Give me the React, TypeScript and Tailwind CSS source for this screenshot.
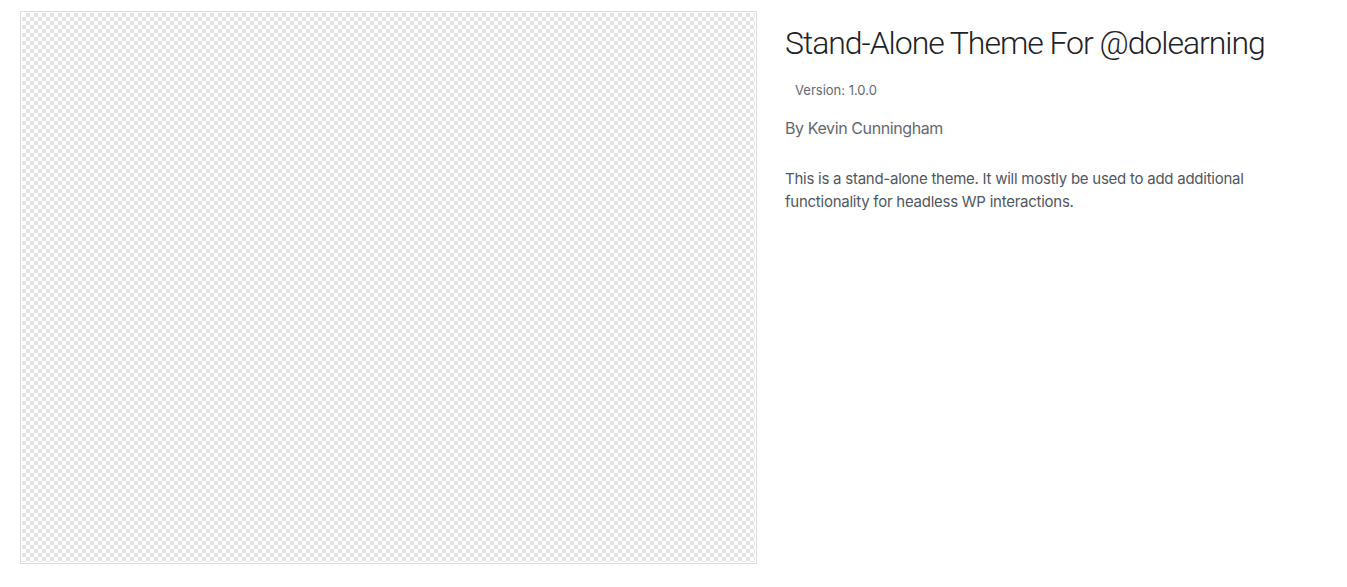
const theme = {
  name: "Stand-Alone Theme For @dolearning",
  version: "1.0.0",
  author: "Kevin Cunningham",
  description:
    "This is a stand-alone theme. It will mostly be used to add additional functionality for headless WP interactions.",
};

const App = () => {
  return (
    <div className="min-h-screen bg-white font-['Inter','Liberation_Sans',sans-serif]">
      <div className="flex items-start pt-[11px] pl-[20px]">
        {/* Screenshot */}
        <div className="w-[737px] h-[553px] shrink-0 border border-[#dcdcde] p-px">
          <div className="w-full h-full bg-[image:repeating-conic-gradient(#e4e4e4_0_25%,#ffffff_0_50%)] bg-[length:8px_8px]" />
        </div>

        {/* Theme info */}
        <div className="ml-[28px] w-[536px]">
          <h2 className="mt-[12px] whitespace-nowrap font-['Roboto',sans-serif] text-[32px] leading-[1.3] font-light tracking-[-1.05px] text-[#1d2327]">
            {theme.name}
          </h2>
          <span className="block mt-[16px] ml-[10px] text-[13px] leading-[1.4] text-[#646970]">
            Version: {theme.version}
          </span>
          <p className="mt-[18px] text-[16px] leading-[1.4] tracking-[-0.4px] text-[#646970]">
            By {theme.author}
          </p>
          <p className="mt-[29px] text-[15px] leading-[1.5] tracking-[-0.25px] text-[#50575e]">
            {theme.description}
          </p>
        </div>
      </div>
    </div>
  );
};

export default App;
